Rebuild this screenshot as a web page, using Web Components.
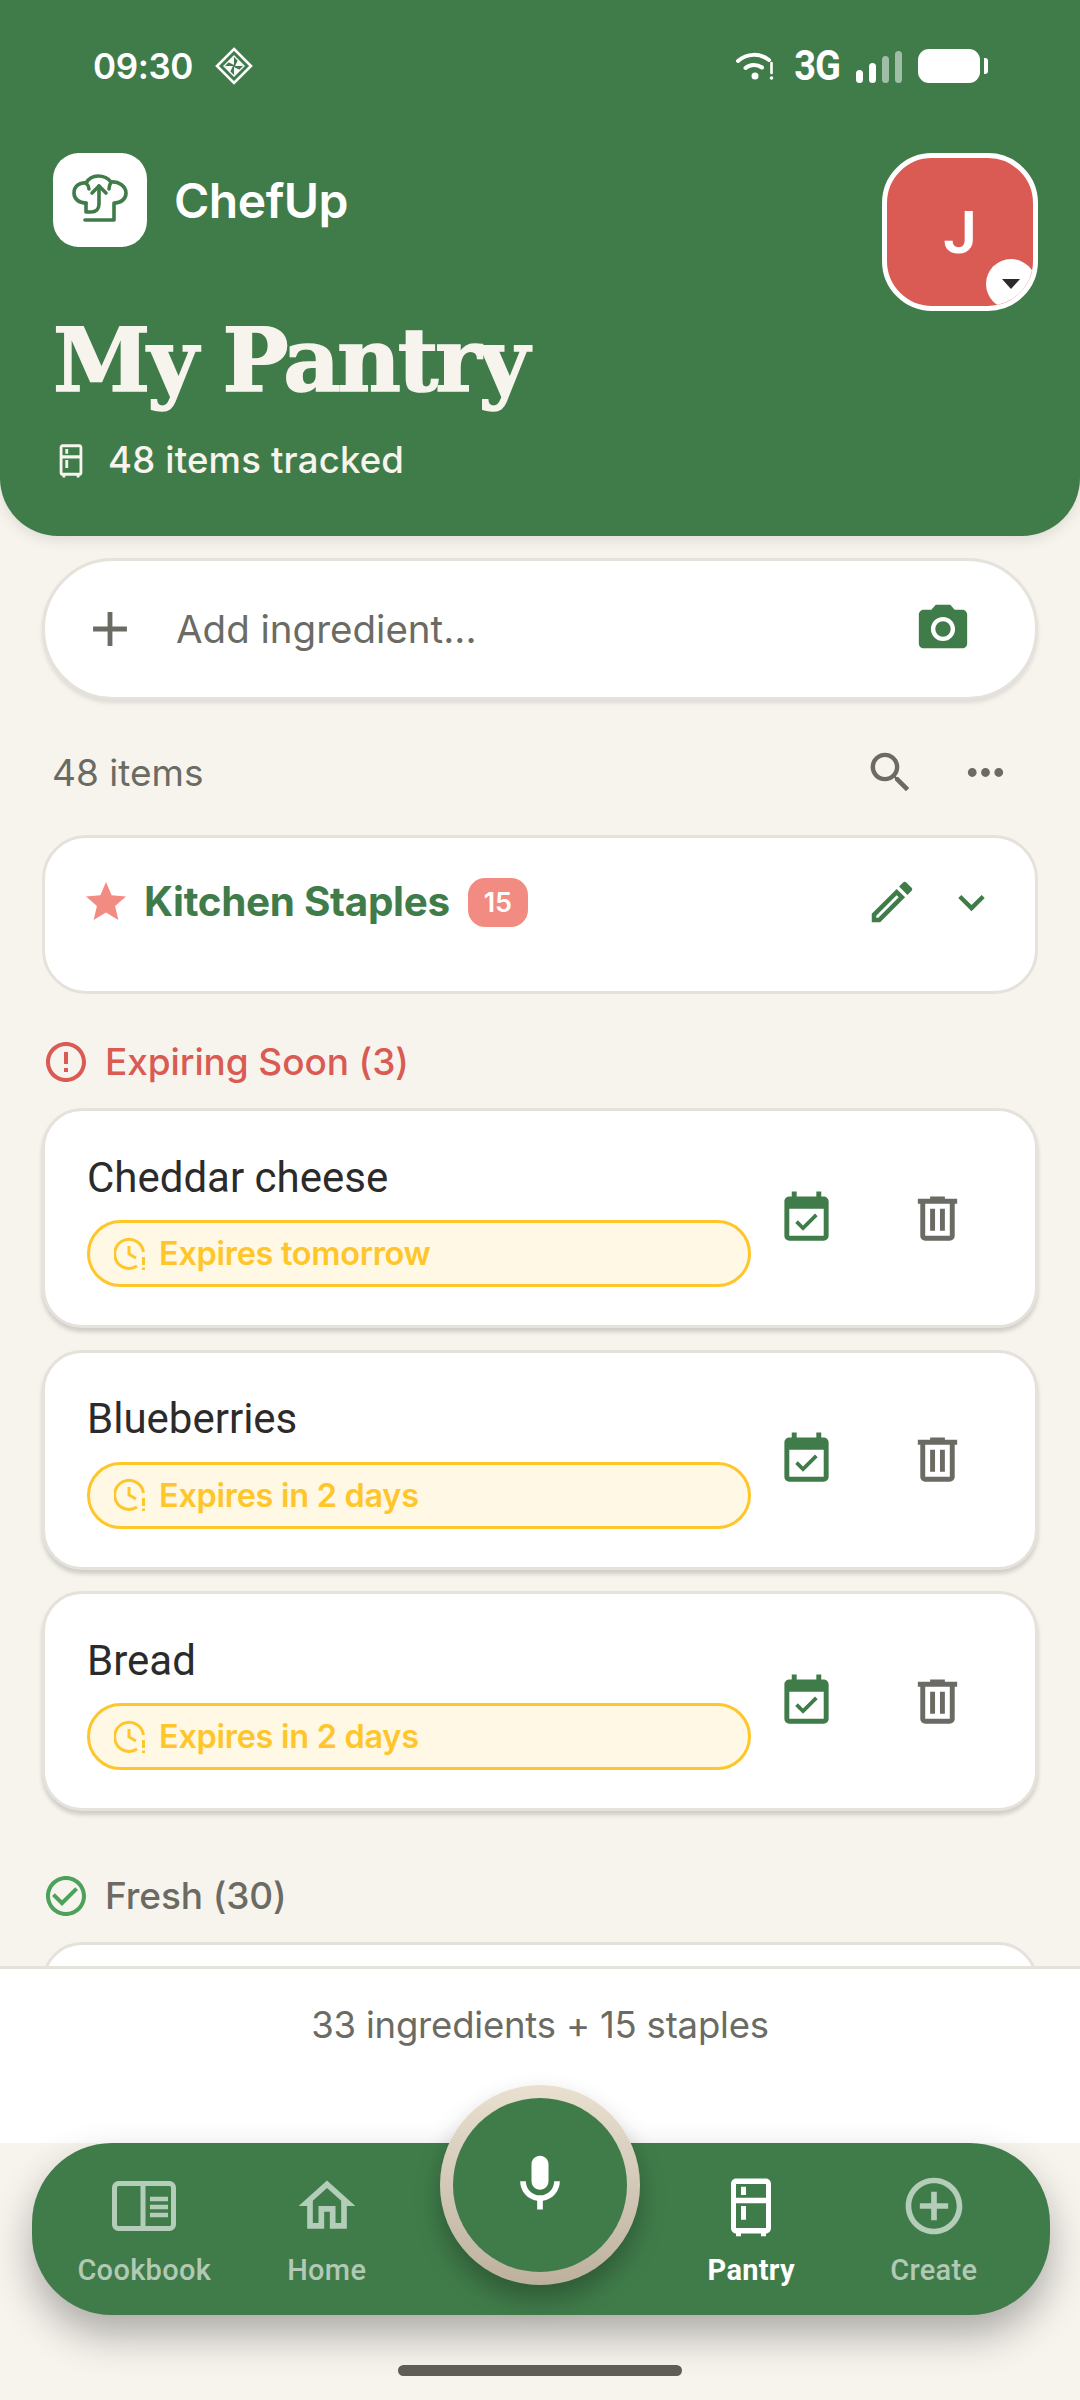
<!DOCTYPE html>
<html>
<head>
<meta charset="utf-8">
<title>ChefUp - My Pantry</title>
<style>
  html, body { margin: 0; padding: 0; background: #F7F4EE; }
  body { width: 1080px; height: 2400px; overflow: hidden; font-family: Inter, "Noto Sans", sans-serif; }
</style>
</head>
<body>
<pantry-app></pantry-app>

<script>
const GREEN = "#407C4A",
    CREAM = "#F7F4EE",
    GREY = "#6B6B64",
    LINE = "#E5E2DB",
    CORAL = "#F28B82",
    RED = "#D95B54",
    AMBER = "#FFC62B";

// material style icon paths, viewBox 24
const ICONS = {
  add: "M19 13h-6v6h-2v-6H5v-2h6V5h2v6h6v2z",
  camera: "M9 2L7.17 4H4c-1.1 0-2 .9-2 2v12c0 1.1.9 2 2 2h16c1.1 0 2-.9 2-2V6c0-1.1-.9-2-2-2h-3.17L15 2H9zm3 15c-2.76 0-5-2.24-5-5s2.24-5 5-5 5 2.24 5 5-2.24 5-5 5zM12 8.8a3.2 3.2 0 1 0 0 6.4 3.2 3.2 0 0 0 0-6.4z",
  search: "M15.5 14h-.79l-.28-.27C15.41 12.59 16 11.11 16 9.5 16 5.91 13.09 3 9.5 3S3 5.91 3 9.5 5.91 16 9.5 16c1.61 0 3.09-.59 4.23-1.57l.27.28v.79l5 4.99L20.49 19l-4.99-5zm-6 0C7.01 14 5 11.99 5 9.5S7.01 5 9.5 5 14 7.01 14 9.5 11.99 14 9.5 14z",
  more: "M6 10c-1.1 0-2 .9-2 2s.9 2 2 2 2-.9 2-2-.9-2-2-2zm12 0c-1.1 0-2 .9-2 2s.9 2 2 2 2-.9 2-2-.9-2-2-2zm-6 0c-1.1 0-2 .9-2 2s.9 2 2 2 2-.9 2-2-.9-2-2-2z",
  star: "M12 17.27L18.18 21l-1.64-7.03L22 9.24l-7.19-.61L12 2 9.19 8.63 2 9.24l5.46 4.73L5.82 21z",
  edit: "M14.06 9.02l.92.92L5.92 19H5v-.92l9.06-9.06M17.66 3c-.25 0-.51.1-.7.29l-1.83 1.83 3.75 3.75 1.83-1.83c.39-.39.39-1.02 0-1.41l-2.34-2.34c-.2-.2-.45-.29-.71-.29zm-3.6 3.19L3 17.25V21h3.75L17.81 9.94l-3.75-3.75z",
  chevron: "M16.59 8.59L12 13.17 7.41 8.59 6 10l6 6 6-6z",
  alert: "M11 15h2v2h-2zm0-8h2v6h-2zm.99-5C6.47 2 2 6.48 2 12s4.47 10 9.99 10C17.52 22 22 17.52 22 12S17.52 2 11.99 2zM12 20c-4.42 0-8-3.58-8-8s3.58-8 8-8 8 3.58 8 8-3.58 8-8 8z",
  check: "M16.59 7.58L10 14.17l-3.59-3.58L5 12l5 5 8-8zM12 2C6.48 2 2 6.48 2 12s4.48 10 10 10 10-4.48 10-10S17.52 2 12 2zm0 18c-4.42 0-8-3.58-8-8s3.58-8 8-8 8 3.58 8 8-3.58 8-8 8z",
  calendar: "M16.53 11.06L15.47 10l-4.88 4.88-2.12-2.12-1.06 1.06L10.59 17l5.94-5.94zM19 3h-1V1h-2v2H8V1H6v2H5c-1.11 0-1.99.9-1.99 2L3 19c0 1.1.89 2 2 2h14c1.1 0 2-.9 2-2V5c0-1.1-.9-2-2-2zm0 16H5V8h14v11z",
  trash: "M15 4V3H9v1H4v2h1v13c0 1.1.9 2 2 2h10c1.1 0 2-.9 2-2V6h1V4h-5zm2 15H7V6h10v13zM9 8h2v9H9zm4 0h2v9h-2z",
  mic: "M12 14c1.66 0 3-1.34 3-3V5c0-1.66-1.34-3-3-3S9 3.34 9 5v6c0 1.66 1.34 3 3 3zM17 11c0 2.76-2.24 5-5 5s-5-2.24-5-5H5c0 3.53 2.61 6.43 6 6.92V21h2v-3.08c3.39-.49 6-3.39 6-6.92h-2z",
  create: "M13 7h-2v4H7v2h4v4h2v-4h4v-2h-4V7zm-1-5C6.48 2 2 6.48 2 12s4.48 10 10 10 10-4.48 10-10S17.52 2 12 2zm0 18c-4.41 0-8-3.59-8-8s3.59-8 8-8 8 3.59 8 8-3.59 8-8 8z",
  home: "M12 5.69l5 4.5V18h-2v-6H9v6H7v-7.81l5-4.5M12 3L2 12h3v8h6v-6h2v6h6v-8h3L12 3z",
  fridge: "M18 2.01L6 2c-1.1 0-2 .89-2 2v16c0 1.1.9 2 2 2v1h2v-1h8v1h2v-1c1.1 0 2-.9 2-2V4c0-1.11-.9-1.99-2-1.99zM18 20H6v-9.02h12V20zm0-11H6V4h12v5zM8 5h2v3H8zm0 7h2v5H8z"
};

function icon(name, size, color, extra = "") {
  return `<svg width="${size}" height="${size}" viewBox="0 0 24 24" fill="${color}" style="display:block;flex:none" ${extra}><path d="${ICONS[name]}"/></svg>`;
}

/*
 * Base class: subclasses give a static html string, rendered in an open shadow root
 */
class ShadowElement extends HTMLElement {
  constructor() {
    super();
    this.attachShadow({mode: 'open'});
    const template = document.createElement('template');
    template.innerHTML = this.constructor.html;
    this.shadowRoot.appendChild(template.content.cloneNode(true));
  }
}

class StatusBar extends ShadowElement {
  static html = `
  <style>
    :host { display: flex; align-items: center; height: 40px; padding: 0 92px 0 93px; color: #fff; }
    .time { font: 600 35px Inter, sans-serif; letter-spacing: -.4px; line-height: 40px; }
    .nfc { margin-left: 22px; }
    .right { margin-left: auto; display: flex; align-items: center; }
    .net { font: 700 38px Roboto, sans-serif; margin: 0 16px 0 20px; transform: scaleY(1.1); letter-spacing: -1px; }
    .bars { display: flex; align-items: flex-end; gap: 6px; height: 32px; margin-top: 2px; }
    .bars i { display: block; width: 7px; background: #fff; border-radius: 4px; }
    .bars i.dim { opacity: .5; }
    .battery { width: 62px; height: 34px; background: #fff; border-radius: 11px; margin-left: 16px; }
    .nub { width: 4px; height: 16px; background: #fff; border-radius: 0 3px 3px 0; margin-left: 4px; }
  </style>
  <span class="time">09:30</span>
  <svg class="nfc" width="38" height="38" viewBox="0 0 38 38" fill="none" stroke="#fff">
    <path d="M19 2L36 19L19 36L2 19Z" stroke-width="2.6"/>
    <path d="M19 9L29 19L19 29L9 19Z" stroke-width="1.4"/>
    <path d="M19 10L19 18L13 15ZM28 19L20 19L23 13ZM19 28L19 20L25 23ZM10 19L18 19L15 25Z" fill="#fff" stroke="none"/>
  </svg>
  <div class="right">
    <svg width="38" height="29" viewBox="0 0 38 29" fill="none" stroke="#fff" stroke-linecap="round">
      <path d="M2 9C11 1 24 1 33 8" stroke-width="4"/>
      <path d="M9.5 16C14 12 21 12 26 15.500" stroke-width="4"/>
      <circle cx="19" cy="24" r="3.500" fill="#fff" stroke="none"/>
      <path d="M35.500 11V21" stroke-width="2.600"/>
      <circle cx="35.500" cy="26" r="1.800" fill="#fff" stroke="none"/>
    </svg>
    <span class="net">3G</span>
    <div class="bars">
      <i style="height:13px"></i><i style="height:20px"></i><i class="dim" style="height:27px"></i><i class="dim" style="height:32px"></i>
    </div>
    <div class="battery"></div>
    <div class="nub"></div>
  </div>`;
}

class PantryHeader extends ShadowElement {
  static html = `
  <style>
    :host { display: block; position: relative; z-index: 2; flex: none; height: 536px; box-sizing: border-box; padding-top: 46px;
      background: ${GREEN}; border-radius: 0 0 58px 58px; box-shadow: 0 4px 14px rgba(0,0,0,.1); color: ${CREAM}; }
    .top { display: flex; justify-content: space-between; align-items: flex-start; margin: 67px 42px 0 53px; }
    .brand { display: flex; align-items: center; gap: 27px; }
    .logo { width: 94px; height: 94px; border-radius: 26px; background: #fff; }
    .name { font: 600 48px Inter, sans-serif; color: #fff; letter-spacing: -.5px; }
    .avatar { position: relative; width: 156px; height: 158px; box-sizing: border-box; overflow: hidden; border: 5px solid #fff; border-radius: 50px;
      background: #DA5B53; display: flex; align-items: center; justify-content: center; font: 600 60px Roboto, sans-serif; color: #fff; }
    .caret { position: absolute; right: -3px; bottom: -3px; width: 50px; height: 50px; border-radius: 50%; background: #fff;
      display: flex; align-items: center; justify-content: center; }
    h1 { margin: -1px 0 0 53px; font: 700 88px/100px "DejaVu Serif", serif; letter-spacing: -3.200px; color: ${CREAM}; -webkit-text-stroke: 1.500px ${CREAM}; }
    .sub { display: flex; align-items: center; gap: 20px; margin: 29px 0 0 54px; font: 500 36.500px/42px Inter, sans-serif; letter-spacing: .2px; color: ${CREAM}; }
  </style>
  <status-bar></status-bar>
  <div class="top">
    <div class="brand">
      <div class="logo">
        <svg width="94" height="94" viewBox="0 0 94 94" fill="none" stroke="${GREEN}" stroke-width="3.600" stroke-linecap="round" stroke-linejoin="round">
          <path d="M33 50C26 50 21 46 21 40C21 33 27 29 33 30C36 25 40 23 45 23C50 23 55 25 58 29C65 28 73 33 73 40C73 46 68 50 61 50V67H32"/>
          <path d="M33 50V59H38C43 59 46 56 46 51V33"/>
          <path d="M39 40L46 33L53 40"/>
          <path d="M33 30C35 32 36 34 36 36M58 29C57 31 56 33 56 36"/>
        </svg>
      </div>
      <span class="name">ChefUp</span>
    </div>
    <div class="avatar">J
      <div class="caret"><svg width="20" height="12" viewBox="0 0 20 12"><path d="M1 1H19L10 11Z" fill="#2B2B2B"/></svg></div>
    </div>
  </div>
  <h1>My Pantry</h1>
  <div class="sub">
    <svg width="34" height="38" viewBox="0 0 24 24" preserveAspectRatio="none" fill="${CREAM}"><path d="${ICONS.fridge}"/></svg>
    <span>48 items tracked</span>
  </div>`;
}

class AddBar extends ShadowElement {
  static html = `
  <style>
    :host { display: flex; align-items: center; height: 142px; box-sizing: border-box; padding: 0 63px 0 36px; background: #fff;
      border: 3px solid ${LINE}; border-radius: 71px; box-shadow: 0 3px 4px rgba(0,0,0,.1); }
    span { margin-left: 37px; font: 400 38.500px Inter, sans-serif; color: ${GREY}; }
    svg:last-child { margin-left: auto; }
  </style>
  ${icon("add", 58, GREY)}
  <span>Add ingredient...</span>
  ${icon("camera", 58, GREEN)}`;
}

class ListToolbar extends ShadowElement {
  static html = `
  <style>
    :host { display: flex; align-items: center; height: 54px; margin: 45px 26px 0 10px; color: ${GREY}; }
    span { font: 400 37px Inter, sans-serif; }
    .tools { margin-left: auto; display: flex; gap: 42px; }
  </style>
  <span><slot></slot></span>
  <div class="tools">${icon("search", 53, GREY)}${icon("more", 53, GREY)}</div>`;
}

class StaplesCard extends ShadowElement {
  static html = `
  <style>
    :host { display: flex; align-items: flex-start; height: 159px; box-sizing: border-box; margin-top: 36px; padding: 40px 37px 0 37px;
      background: #fff; border: 3px solid ${LINE}; border-radius: 44px; }
    .title { margin-left: 14px; font: 700 40.400px/48px Inter, sans-serif; color: ${GREEN}; letter-spacing: -.3px; }
    .count { margin: 0 0 0 18px; width: 60px; height: 49px; border-radius: 17px; background: ${CORAL}; color: #fff;
      font: 600 27px/49px Inter, sans-serif; text-align: center; }
    .tools { margin-left: auto; display: flex; align-items: center; gap: 26px; height: 48px; }
  </style>
  ${icon("star", 48, CORAL)}
  <span class="title"><slot></slot></span>
  <span class="count">15</span>
  <div class="tools">${icon("edit", 54, GREEN)}${icon("chevron", 53, GREEN)}</div>`;
}

class SectionLabel extends ShadowElement {
  static html = `
  <style>
    :host { display: flex; align-items: center; gap: 15px; height: 48px; font: 500 37px/48px Inter, sans-serif; letter-spacing: -.1px; }
    .icon { display: block; width: 48px; height: 48px; }
  </style>
  <div class="icon"></div>
  <slot></slot>`;

  connectedCallback() {
    const kind = this.getAttribute("kind");
    this.style.color = kind === "alert" ? RED : GREY;
    this.shadowRoot.querySelector(".icon").innerHTML = kind === "alert" ? icon("alert", 48, RED) : icon("check", 48, "#4CA25A");
  }
}

class PantryItem extends ShadowElement {
  static html = `
  <style>
    :host { display: flex; align-items: center; height: 220px; box-sizing: border-box; padding: 0 42px 0 42px;
      background: #fff; border: 3px solid ${LINE}; border-radius: 40px; box-shadow: 0 4px 4px rgba(0,0,0,.16); }
    .main { width: 664px; flex: none; padding-top: 3.500px; }
    .name { font: 400 42px/50px Roboto, sans-serif; color: #2B2B2B; }
    .pill { display: flex; align-items: center; gap: 11px; height: 67px; box-sizing: border-box; margin-top: 17.500px; padding-left: 24px;
      background: #FFF8E5; border: 3px solid ${AMBER}; border-radius: 34px; font: 600 32.500px Inter, sans-serif; color: ${AMBER}; letter-spacing: -.3px; }
    .actions { display: flex; gap: 72px; margin-left: 26px; }
  </style>
  <div class="main">
    <div class="name"><slot></slot></div>
    <div class="pill">
      <svg width="34" height="34" viewBox="0 0 34 34" fill="none" stroke="${AMBER}" stroke-width="3">
        <path d="M23 29A14.500 14.500 0 1 1 29.500 15"/>
        <path d="M15 9V17L22 21"/>
        <path d="M29.500 20V33" stroke-dasharray="8 2.500"/>
      </svg>
      <slot name="expiry"></slot>
    </div>
  </div>
  <div class="actions">${icon("calendar", 59, GREEN)}${icon("trash", 59, GREY)}</div>`;
}

// first card of the Fresh list, the footer covers most of it
class ItemStub extends ShadowElement {
  static html = `
  <style>
    :host { display: block; height: 200px; margin-top: 22px; background: #fff; border: 3px solid ${LINE}; border-radius: 40px; }
  </style>`;
}

class SummaryBar extends ShadowElement {
  static html = `
  <style>
    :host { display: block; flex: none; height: 177px; box-sizing: border-box; padding-top: 34px; background: #fff; border-top: 3px solid ${LINE};
      text-align: center; font: 400 36.500px/44px Inter, sans-serif; color: ${GREY}; letter-spacing: -.2px; }
  </style>
  <slot></slot>`;
}

class NavItem extends ShadowElement {
  static html = `
  <style>
    :host { display: flex; flex-direction: column; align-items: center; font: 500 29px/36px Roboto, sans-serif; letter-spacing: .3px; color: rgba(255,255,255,.6); }
    :host([active]) { color: #fff; font-weight: 700; }
    .icon { display: flex; align-items: center; justify-content: center; height: 68px; margin-bottom: 12px; }
  </style>
  <div class="icon"><slot name="icon"></slot></div>
  <slot></slot>`;
}

class BottomNav extends ShadowElement {
  static html = `
  <style>
    :host { display: grid; grid-template-columns: 182.500px 182.500px 1fr 182.500px 182.500px; position: relative; z-index: 3; flex: none; height: 172px; box-sizing: border-box;
      margin: 0 30px 0 32px; padding: 29px 25px 0 21px; background: ${GREEN}; border-radius: 80px; box-shadow: 0 20px 40px rgba(0,0,0,.3); }
    .mic { position: absolute; left: 408px; top: -58px; width: 200px; height: 200px; box-sizing: border-box; border-radius: 50%;
      background: linear-gradient(#E9E0D0, #BDB19E); box-shadow: 0 14px 26px rgba(0,0,0,.28); display: flex; align-items: center; justify-content: center; }
    .mic div { width: 174px; height: 174px; border-radius: 50%; background: ${GREEN}; display: flex; justify-content: center; }
    .mic svg { align-self: flex-start; margin-top: 52px; }
    .gap { grid-column: 3; }
  </style>
  <slot name="left"></slot>
  <div class="gap"></div>
  <slot name="right"></slot>
  <div class="mic"><div>${icon("mic", 68, "#fff")}</div></div>`;
}

class HomeBar extends ShadowElement {
  static html = `
  <style>
    :host { display: flex; justify-content: center; flex: none; height: 85px; box-sizing: border-box; padding-top: 50px; }
    div { width: 284px; height: 11px; border-radius: 6px; background: #5F5E58; }
  </style>
  <div></div>`;
}

class PantryApp extends ShadowElement {
  static html = `
  <style>
    :host { display: flex; flex-direction: column; width: 1080px; height: 2400px; background: ${CREAM}; }
    main { flex: 1; min-height: 0; overflow: hidden; padding: 22px 42px 0; }
    .expiring { margin-top: 44px; margin-bottom: 22px; }
    .list { display: flex; flex-direction: column; gap: 21.500px; }
    .fresh { margin-top: 60.500px; }
  </style>
  <pantry-header></pantry-header>
  <main>
    <add-bar></add-bar>
    <list-toolbar>48 items</list-toolbar>
    <staples-card>Kitchen Staples</staples-card>
    <section-label class="expiring" kind="alert">Expiring Soon (3)</section-label>
    <div class="list">
      <pantry-item>Cheddar cheese<span slot="expiry">Expires tomorrow</span></pantry-item>
      <pantry-item>Blueberries<span slot="expiry">Expires in 2 days</span></pantry-item>
      <pantry-item>Bread<span slot="expiry">Expires in 2 days</span></pantry-item>
    </div>
    <section-label class="fresh" kind="check">Fresh (30)</section-label>
    <item-stub></item-stub>
  </main>
  <summary-bar>33 ingredients + 15 staples</summary-bar>
  <bottom-nav>
    <nav-item slot="left">
      <svg slot="icon" width="64" height="50" viewBox="0 0 64 50" fill="none" stroke="#B3CDB8" stroke-width="5">
        <rect x="2.500" y="2.500" width="59" height="45" rx="4"/>
        <path d="M31 2V48"/>
        <path d="M38 18H56M38 26H56M38 34H56" stroke-width="4.500"/>
      </svg>
      Cookbook
    </nav-item>
    <nav-item slot="left">
      <svg slot="icon" width="68" height="68" viewBox="0 0 24 24" fill="#B3CDB8"><path d="${ICONS.home}"/></svg>
      Home
    </nav-item>
    <nav-item slot="right" active>
      <svg slot="icon" width="60" height="66" viewBox="0 0 24 24" preserveAspectRatio="none" fill="#fff"><path d="${ICONS.fridge}"/></svg>
      Pantry
    </nav-item>
    <nav-item slot="right">
      <svg slot="icon" width="68" height="68" viewBox="0 0 24 24" fill="#B3CDB8"><path d="${ICONS.create}"/></svg>
      Create
    </nav-item>
  </bottom-nav>
  <home-bar></home-bar>`;
}

customElements.define('status-bar', StatusBar);
customElements.define('pantry-header', PantryHeader);
customElements.define('add-bar', AddBar);
customElements.define('list-toolbar', ListToolbar);
customElements.define('staples-card', StaplesCard);
customElements.define('section-label', SectionLabel);
customElements.define('pantry-item', PantryItem);
customElements.define('item-stub', ItemStub);
customElements.define('summary-bar', SummaryBar);
customElements.define('nav-item', NavItem);
customElements.define('bottom-nav', BottomNav);
customElements.define('home-bar', HomeBar);
customElements.define('pantry-app', PantryApp);
</script>
</body>
</html>
